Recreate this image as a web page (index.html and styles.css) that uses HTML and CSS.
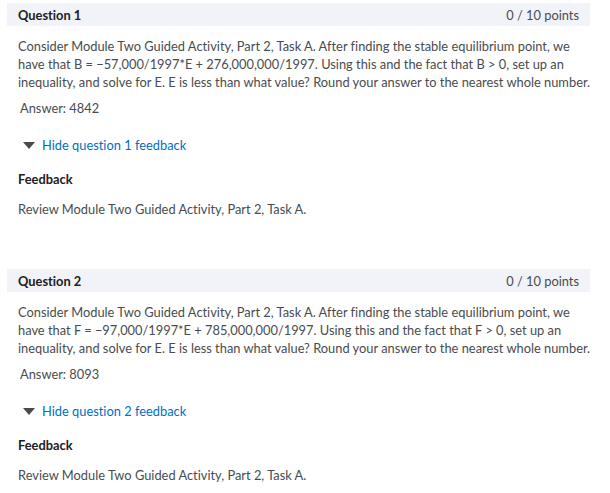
FILE: index.html
```html
<!DOCTYPE html>
<html lang="en">
<head>
    <meta charset="UTF-8">
    <title>Quiz Results</title>
    <link rel="stylesheet" href="styles.css">
</head>
<body>
    <div class="quiz">
        <div class="question">
            <div class="q-head">
                <h2>Question 1</h2>
                <span class="points">0 / 10 points</span>
            </div>
            <p class="q-text">Consider Module Two Guided Activity, Part 2, Task A. After finding the stable equilibrium point, we have that B = &minus;57,000/1997*E + 276,000,000/1997. Using this and the fact that B &gt; 0, set up an inequality, and solve for E. E is less than what value? Round your answer to the nearest whole number.</p>
            <p class="answer">Answer: 4842</p>
            <a class="toggle" href="#"><span class="caret"></span>Hide question 1 feedback</a>
            <h3 class="fb-title">Feedback</h3>
            <p class="fb-text">Review Module Two Guided Activity, Part 2, Task A.</p>
        </div>

        <div class="question">
            <div class="q-head">
                <h2>Question 2</h2>
                <span class="points">0 / 10 points</span>
            </div>
            <p class="q-text">Consider Module Two Guided Activity, Part 2, Task A. After finding the stable equilibrium point, we have that F = &minus;97,000/1997*E + 785,000,000/1997. Using this and the fact that F &gt; 0, set up an inequality, and solve for E. E is less than what value? Round your answer to the nearest whole number.</p>
            <p class="answer">Answer: 8093</p>
            <a class="toggle" href="#"><span class="caret"></span>Hide question 2 feedback</a>
            <h3 class="fb-title">Feedback</h3>
            <p class="fb-text">Review Module Two Guided Activity, Part 2, Task A.</p>
        </div>
    </div>
</body>
</html>
```

FILE: styles.css
```css
body {
    margin: 0;
    padding: 0;
    background: #fff;
    font-family: Lato, "Open Sans", sans-serif;
    font-size: 12.85px;
    line-height: 18px;
    color: #494c4e;
    font-variant-ligatures: none;
}

.quiz {
    width: 583px;
    padding: 3px 0 0 7px;
}

.question {
    padding-bottom: 51px;
}

.q-head {
    display: flex;
    justify-content: space-between;
    align-items: center;
    height: 23px;
    padding: 0 11px;
    background-color: #f1f3f8;
}

.q-head h2 {
    margin: 0;
    font-size: 12.85px;
    font-weight: 700;
    color: #202122;
}

.points {
    color: #494c4e;
}

.q-text {
    margin: 11px -6px 0 0;
    padding: 0 0 0 11px;
}

.answer {
    margin: 8px 0 0;
    padding-left: 13px;
}

.toggle {
    display: flex;
    align-items: center;
    margin: 19px 0 0 16px;
    color: #006fbf;
    text-decoration: none;
}

.caret {
    width: 0;
    height: 0;
    margin-right: 7px;
    border-left: 6px solid transparent;
    border-right: 6px solid transparent;
    border-top: 7px solid #494c4e;
}

.fb-title {
    margin: 16px 0 0 11px;
    font-size: 12.85px;
    font-weight: 700;
    color: #202122;
}

.fb-text {
    margin: 12px 0 0 11px;
}
```
